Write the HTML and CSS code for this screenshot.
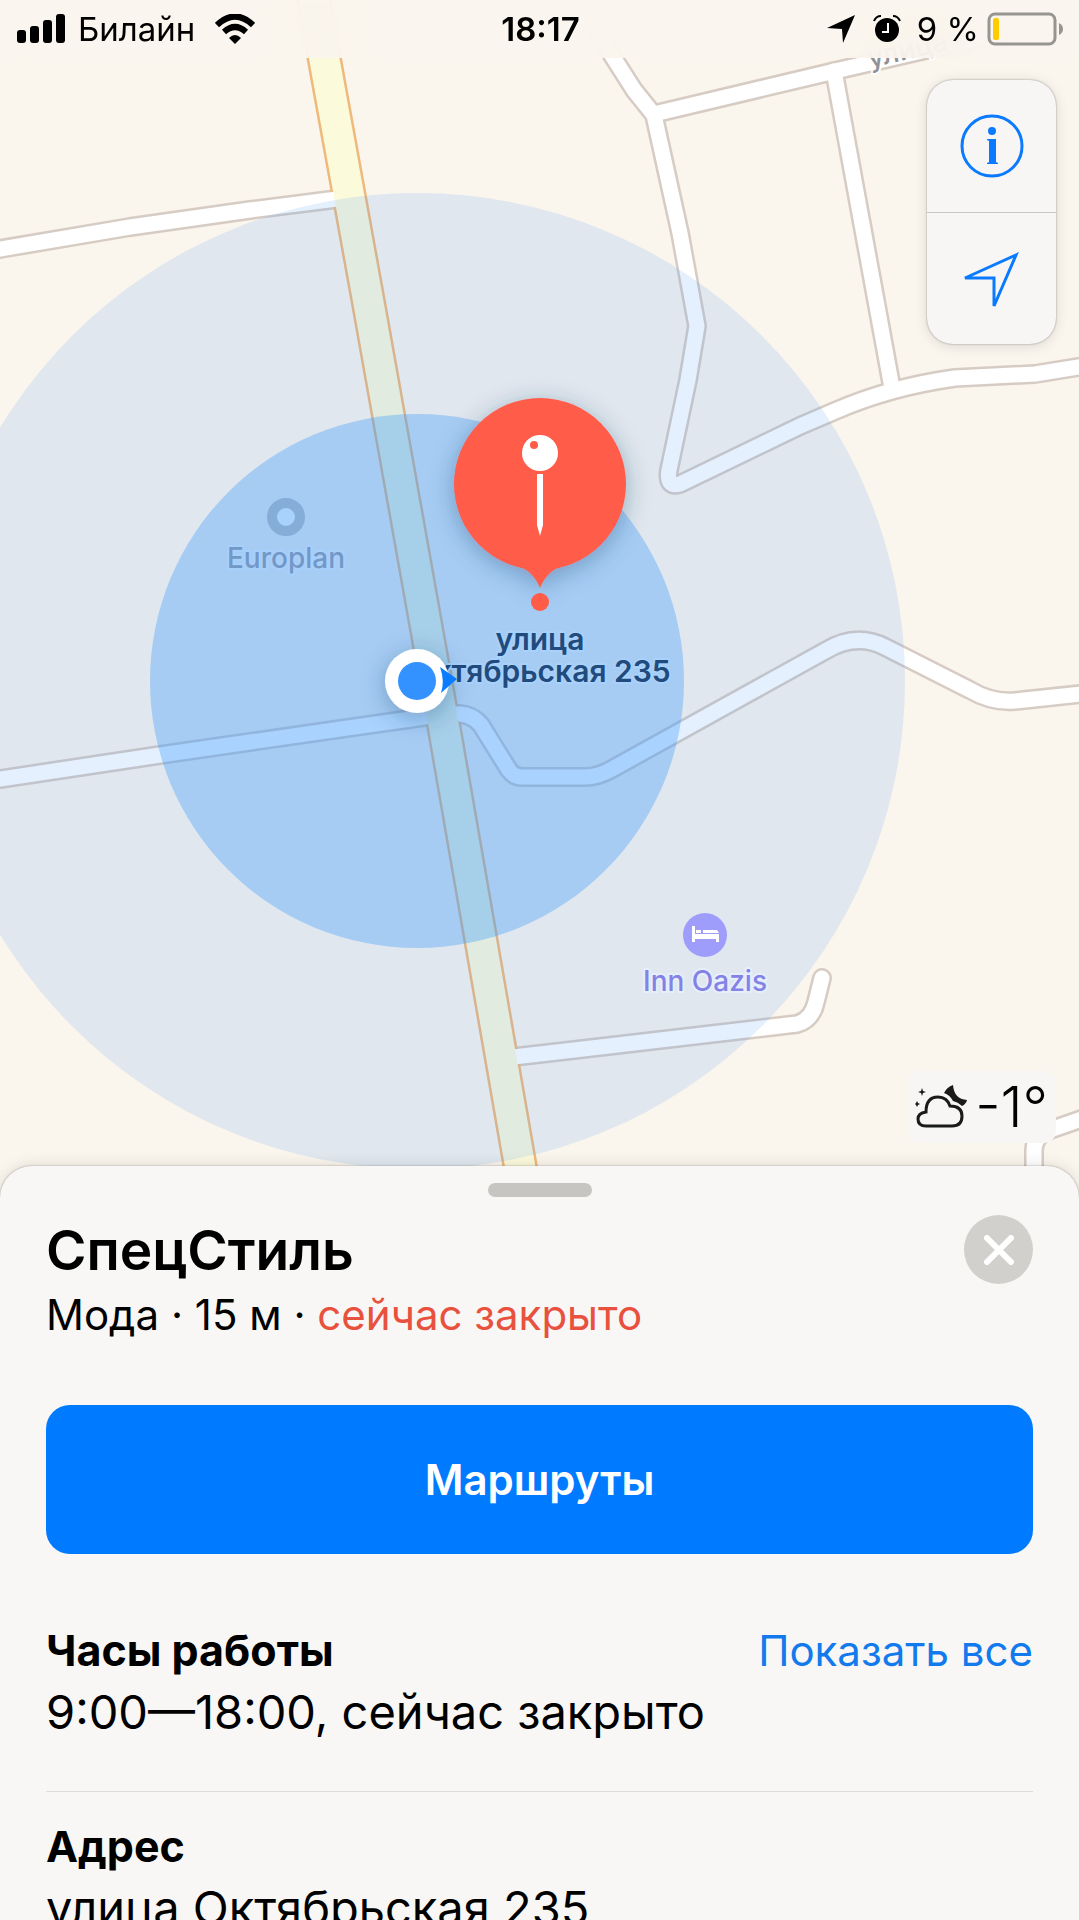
FILE: index.html
```html
<!DOCTYPE html>
<html lang="ru">
<head>
    <meta charset="UTF-8">
    <meta name="viewport" content="width=device-width, initial-scale=1.0">
    <title>Карты</title>
    <link rel="stylesheet" href="styles.css">
</head>
<body>
    <div class="app">
        <section class="map">
            <svg class="map-canvas" viewBox="0 0 1079 1200" preserveAspectRatio="xMidYMin slice">
                <defs>
                    <g id="streets">
                        <path d="M-10 251 L0 249 L130 227 L250 210 L345 198"/>
                        <path d="M600 35 L613 57 L634 90 L654 115 L680 233 L697 326 L688 380 L669 470 Q666 488 680 484 L800 426 L835 411 Q890 387 955 378 L1035 374 L1090 365"/>
                        <path d="M654 114 L835 71 L1000 33"/>
                        <path d="M834 71 L892 388"/>
                        <path d="M-10 781 L0 779 L160 755 L445 714"/>
                        <path d="M445 714 L460 714 Q473 715 481 725 L509 770 Q514 777 522 777 L585 777 Q598 777 612 769 L825 651 Q856 632 885 647 L970 690 Q992 703 1015 701 L1090 693"/>
                        <path d="M505 1058 L600 1047 L797 1024 Q812 1020 816 1002 L822 978"/>
                        <path d="M1034 1200 V1150 Q1035 1134 1050 1130 L1090 1116"/>
                    </g>
                    <path id="highway" d="M314 0 L324 57 L368 300 L444 727 L526 1200"/>
                    <filter id="shadow" x="-50%" y="-50%" width="200%" height="200%">
                        <feDropShadow dx="0" dy="5" stdDeviation="12" flood-color="#1c3c64" flood-opacity="0.35"/>
                    </filter>
                </defs>

                <!-- roads: casings first, then fills -->
                <rect class="land" width="1079" height="1200"/>
                <use href="#streets" class="street-casing"/>
                <use href="#highway" class="highway-casing"/>
                <use href="#streets" class="street"/>
                <use href="#highway" class="highway"/>

                <!-- location accuracy -->
                <circle class="accuracy-outer" cx="417" cy="681" r="488"/>
                <circle class="accuracy-inner" cx="417" cy="681" r="267"/>

                <text class="street-name" transform="translate(870 68) rotate(-13)">улица</text>

                <g class="poi poi-office">
                    <circle cx="286" cy="517" r="14"/>
                    <text x="286" y="568">Europlan</text>
                </g>

                <g class="poi poi-hotel">
                    <circle cx="705" cy="935" r="22"/>
                    <path d="M692 926 h3 v8 h24 v8 h-3 v-3 h-21 v3 h-3 z M696 930 h5 v3 h-5 z M703 930 h14 l2 3 h-16 z"/>
                    <text x="705" y="991">Inn Oazis</text>
                </g>

                <g class="pin-label">
                    <text x="540" y="650">улица</text>
                    <text x="541" y="682">Октябрьская 235</text>
                </g>

                <g class="user">
                    <circle cx="417" cy="681" r="32" fill="#fff" filter="url(#shadow)"/>
                    <circle cx="417" cy="681" r="19" fill="#3392ff"/>
                    <path d="M440 667 L457 679 L441 693 Q445 681 440 667 Z" fill="#0a7cff"/>
                </g>

                <g class="pin">
                    <g fill="#ff5c48" filter="url(#shadow)">
                        <circle cx="540" cy="484" r="86"/>
                        <path d="M516 566 Q532 569 540 588 Q548 569 564 566 Z"/>
                    </g>
                    <circle cx="540" cy="602" r="9" fill="#ff5c48"/>
                    <circle cx="540" cy="453" r="18" fill="#fff"/>
                    <circle cx="534" cy="445" r="4" fill="#ff5c48"/>
                    <path fill="#fff" d="M537 474 h6 v51 l-3 11 l-3 -11 z"/>
                </g>
            </svg>

            <header class="status-bar">
                <div class="status-left">
                    <svg width="49" height="30" viewBox="0 0 49 30">
                        <rect x="0" y="16" width="9" height="13" rx="3"/>
                        <rect x="13" y="12" width="9" height="17" rx="3"/>
                        <rect x="26" y="6" width="9" height="23" rx="3"/>
                        <rect x="39" y="0" width="9" height="29" rx="3"/>
                    </svg>
                    <span>Билайн</span>
                    <svg class="wifi" width="40" height="30" viewBox="0 0 40 30">
                        <path d="M2 11 Q20 -6 38 11" stroke-width="6"/>
                        <path d="M9 18 Q20 8 31 18" stroke-width="6"/>
                        <path class="wifi-dot" d="M14 24 Q20 18 26 24 L20 30 Z"/>
                    </svg>
                </div>
                <time class="clock">18:17</time>
                <div class="status-right">
                    <svg width="28" height="28" viewBox="0 0 28 28"><path d="M0 13 L28 0 L16 28 L15 14 Z"/></svg>
                    <svg class="alarm" width="28" height="28" viewBox="0 0 28 28">
                        <circle cx="14" cy="15" r="12"/>
                        <path d="M1 6 Q3 1 8 1 M27 6 Q25 1 20 1" fill="none" stroke="#000" stroke-width="2"/>
                        <path d="M15 8 V17 H9" fill="none" stroke="#fff" stroke-width="2"/>
                    </svg>
                    <span>9 %</span>
                    <svg class="battery" width="77" height="34" viewBox="0 0 77 34">
                        <rect x="2" y="2" width="66" height="30" rx="6" fill="none" stroke="#979590" stroke-width="3"/>
                        <rect x="6" y="6" width="6" height="22" rx="2" fill="#fc0"/>
                        <path d="M72 11 Q76 13 76 17 Q76 21 72 23 Z" fill="#979590"/>
                    </svg>
                </div>
            </header>

            <div class="map-overlay">
                <div class="controls">
                    <button type="button" class="control-btn" aria-label="Информация">
                        <svg width="64" height="64" viewBox="0 0 64 64">
                            <circle cx="32" cy="32" r="30" fill="none" stroke="#0a7aff" stroke-width="3"/>
                            <circle cx="32" cy="17" r="4" fill="#0a7aff"/>
                            <path fill="#0a7aff" d="M27 25 h9 v23 l2 1 v1 h-11 v-1 l2 -1 v-21 l-2 -1 z"/>
                        </svg>
                    </button>
                    <button type="button" class="control-btn" aria-label="Моё местоположение">
                        <svg width="64" height="64" viewBox="0 0 64 64">
                            <path d="M5 31 L56 8 L34 59 L34 31 Z" fill="none" stroke="#0a7aff" stroke-width="3"/>
                        </svg>
                    </button>
                </div>
                <div class="weather">
                    <svg width="54" height="46" viewBox="0 0 54 46">
                        <path class="moon" d="M38 1 Q39 15 52 16 Q51 20 47 22 Q43 18 38 17 Q35 11 29 9 Q32 3 38 1 Z"/>
                        <path class="cloud" d="M11 42 Q3 42 3 35 Q3 29 11 28 Q11 13 23 13 Q32 13 35 22 Q47 22 47 32 Q47 42 37 42 Z"/>
                        <path class="moon" d="M7 4 L8 7 L11 8 L8 9 L7 12 L6 9 L3 8 L6 7 Z M2 17 L3 19 L5 20 L3 21 L2 23 L1 21 L0 20 L1 19 Z"/>
                    </svg>
                    <span>-1°</span>
                </div>
            </div>
        </section>

        <main class="sheet">
            <div class="grabber"></div>
            <div class="place-header">
                <div>
                    <h1>СпецСтиль</h1>
                    <p class="place-info">Мода · 15 м · <span class="closed">сейчас закрыто</span></p>
                </div>
                <button type="button" class="close-btn" aria-label="Закрыть">
                    <svg width="30" height="30" viewBox="0 0 30 30"><path d="M3 3 L27 27 M27 3 L3 27" stroke="#fff" stroke-width="6" stroke-linecap="round"/></svg>
                </button>
            </div>
            <button type="button" class="btn">Маршруты</button>
            <section class="info-row">
                <div class="info-title">
                    <h2>Часы работы</h2>
                    <a href="#">Показать все</a>
                </div>
                <p>9:00—18:00, сейчас закрыто</p>
            </section>
            <section class="info-row">
                <div class="info-title">
                    <h2>Адрес</h2>
                </div>
                <p>улица Октябрьская 235</p>
            </section>
        </main>
    </div>
</body>
</html>
```

FILE: styles.css
```css
* {
    box-sizing: border-box;
}
body {
    font-family: Inter, "Liberation Sans", sans-serif;
    margin: 0;
    color: #000;
    background-color: #f8f7f5;
}
h1, h2, p {
    margin: 0;
}
button {
    font-family: inherit;
    border: none;
    padding: 0;
    cursor: pointer;
}
.app {
    display: flex;
    flex-direction: column;
    height: 100vh;
    overflow: hidden;
}

/* Map */
.map {
    position: relative;
    flex: none;
    display: flex;
    flex-direction: column;
    aspect-ratio: 1079 / 1200;
}
.map-canvas {
    position: absolute;
    top: 0;
    left: 0;
    width: 100%;
    height: 100%;
}
.land {
    fill: #faf5ed;
}
.street-casing, .street, .highway-casing, .highway {
    fill: none;
    stroke-linecap: round;
    stroke-linejoin: round;
}
.street-casing {
    stroke: #d6ccc4;
    stroke-width: 20;
}
.street {
    stroke: #fff;
    stroke-width: 15;
}
.highway-casing {
    stroke: #f0b97c;
    stroke-width: 35;
}
.highway {
    stroke: #fbfadb;
    stroke-width: 30;
}
.accuracy-outer {
    fill: rgba(70, 148, 250, 0.14);
}
.accuracy-inner {
    fill: rgba(58, 156, 255, 0.35);
}
.map-canvas text {
    font-size: 28px;
    font-weight: 500;
    text-anchor: middle;
    paint-order: stroke;
    stroke-width: 4px;
    stroke-linejoin: round;
}
.map-canvas .street-name {
    fill: #8f9197;
    stroke: #fff;
    text-anchor: start;
}
.poi-office text {
    fill: #7398c6;
    stroke: rgba(168, 209, 255, 0.8);
}
.poi-office circle {
    fill: #a8d1fc;
    stroke: #86add7;
    stroke-width: 10px;
}
.poi-hotel text {
    fill: #8482e4;
    stroke: #e5effd;
}
.poi-hotel circle {
    fill: #9f9dfb;
}
.poi-hotel path {
    fill: #fff;
}
.map-canvas .pin-label text {
    font-size: 30px;
    font-weight: 600;
    fill: #214a7d;
    stroke: #a8d1fb;
}

/* Status bar */
.status-bar {
    position: relative;
    display: grid;
    grid-template-columns: 1fr auto 1fr;
    align-items: center;
    height: 58px;
    padding: 0 15px 0 17px;
    font-size: 33px;
    background-color: rgba(250, 245, 237, 0.9);
    backdrop-filter: blur(20px);
}
.status-left, .status-right {
    display: flex;
    align-items: center;
    gap: 12px;
}
.wifi {
    margin-left: 8px;
    fill: none;
    stroke: #000;
}
.wifi-dot {
    fill: #000;
    stroke: none;
}
.clock {
    font-weight: 600;
}
.status-right {
    justify-content: flex-end;
}
.alarm {
    margin: 0 4px 0 6px;
}
.battery {
    margin-left: -4px;
}

/* Buttons and weather over the map */
.map-overlay {
    position: relative;
    flex: 1;
    display: flex;
    flex-direction: column;
    justify-content: space-between;
    align-items: flex-end;
    padding: 22px 23px 57px;
}
.controls {
    display: flex;
    flex-direction: column;
    width: 129px;
    border-radius: 26px;
    background-color: #f7f6f5;
    box-shadow: 0 0 2px rgba(0, 0, 0, 0.4), 0 2px 14px rgba(0, 0, 0, 0.12);
}
.control-btn {
    display: flex;
    align-items: center;
    justify-content: center;
    height: 132px;
    background: none;
}
.control-btn + .control-btn {
    border-top: 1px solid #c8c7c5;
}
.weather {
    display: flex;
    align-items: center;
    gap: 6px;
    height: 72px;
    padding: 0 8px;
    border-radius: 12px;
    font-size: 56px;
    font-weight: 300;
    background-color: #f7f6f4;
}
.moon {
    fill: #1a1a1a;
}
.cloud {
    fill: #f7f6f4;
    stroke: #1a1a1a;
    stroke-width: 3px;
}

/* Place card */
.sheet {
    position: relative;
    flex: 1;
    min-height: 0;
    margin-top: -34px;
    padding: 17px 46px 0;
    border-radius: 32px 32px 0 0;
    background-color: #f8f7f5;
    box-shadow: 0 0 2px rgba(0, 0, 0, 0.35), 0 0 16px rgba(0, 0, 0, 0.12);
    overflow: hidden;
}
.grabber {
    width: 104px;
    height: 14px;
    margin: 0 auto;
    border-radius: 7px;
    background-color: #c6c5c1;
}
.place-header {
    display: flex;
    justify-content: space-between;
    align-items: flex-start;
    padding-top: 18px;
}
h1 {
    font-size: 55px;
    font-weight: 600;
    line-height: 70px;
}
.place-info {
    font-size: 42px;
    line-height: 60px;
}
.closed {
    color: #e8513d;
}
.close-btn {
    display: flex;
    align-items: center;
    justify-content: center;
    width: 69px;
    height: 69px;
    border-radius: 50%;
    background-color: #d1d0cd;
}
.btn {
    display: block;
    width: 100%;
    height: 149px;
    margin-top: 60px;
    border-radius: 24px;
    font-size: 42px;
    font-weight: 600;
    color: #fff;
    background-color: #007aff;
}
.info-row {
    padding: 24px 0 48px;
    border-bottom: 1px solid #deddda;
}
.btn + .info-row {
    padding-top: 66px;
}
.info-title {
    display: flex;
    justify-content: space-between;
    align-items: baseline;
    font-size: 42px;
    line-height: 61px;
}
h2 {
    font-size: 43px;
    font-weight: 700;
}
.info-title a {
    color: #127aec;
    text-decoration: none;
}
.info-row p {
    font-size: 47px;
    line-height: 62px;
}
```
